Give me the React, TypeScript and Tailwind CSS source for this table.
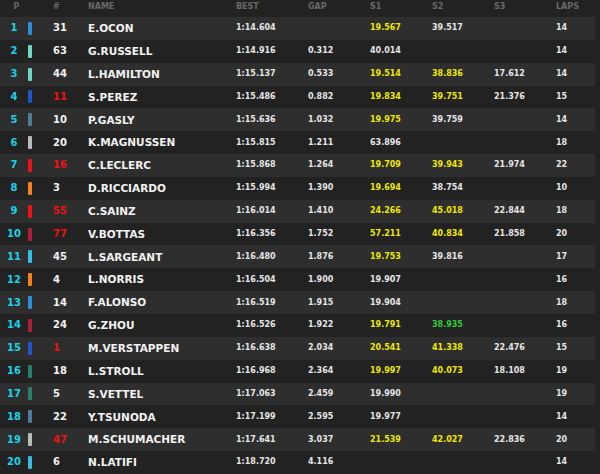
const TEAM = {
  alpine: '#2b8fd6',
  merc: '#6fd6bf',
  rb: '#1f55c9',
  at: '#4f7a9c',
  haas: '#b8bcbf',
  ferrari: '#e8141a',
  mclaren: '#f5821f',
  alfa: '#b0203a',
  williams: '#38bde0',
  aston: '#2a7f69',
}

type Cell = [string, 'w' | 'y' | 'g'] | null

interface Row {
  num: string
  red?: boolean
  name: string
  team: string
  best: string
  gap: string
  s1: Cell
  s2: Cell
  s3: Cell
  laps: string
}

const rows: Row[] = [
  { num: '31', name: 'E.OCON', team: TEAM.alpine, best: '1:14.604', gap: '', s1: ['19.567', 'y'], s2: ['39.517', 'w'], s3: null, laps: '14' },
  { num: '63', name: 'G.RUSSELL', team: TEAM.merc, best: '1:14.916', gap: '0.312', s1: ['40.014', 'w'], s2: null, s3: null, laps: '14' },
  { num: '44', name: 'L.HAMILTON', team: TEAM.merc, best: '1:15.137', gap: '0.533', s1: ['19.514', 'y'], s2: ['38.836', 'y'], s3: ['17.612', 'w'], laps: '14' },
  { num: '11', red: true, name: 'S.PEREZ', team: TEAM.rb, best: '1:15.486', gap: '0.882', s1: ['19.834', 'y'], s2: ['39.751', 'y'], s3: ['21.376', 'w'], laps: '15' },
  { num: '10', name: 'P.GASLY', team: TEAM.at, best: '1:15.636', gap: '1.032', s1: ['19.975', 'y'], s2: ['39.759', 'w'], s3: null, laps: '14' },
  { num: '20', name: 'K.MAGNUSSEN', team: TEAM.haas, best: '1:15.815', gap: '1.211', s1: ['63.896', 'w'], s2: null, s3: null, laps: '18' },
  { num: '16', red: true, name: 'C.LECLERC', team: TEAM.ferrari, best: '1:15.868', gap: '1.264', s1: ['19.709', 'y'], s2: ['39.943', 'y'], s3: ['21.974', 'w'], laps: '22' },
  { num: '3', name: 'D.RICCIARDO', team: TEAM.mclaren, best: '1:15.994', gap: '1.390', s1: ['19.694', 'y'], s2: ['38.754', 'w'], s3: null, laps: '10' },
  { num: '55', red: true, name: 'C.SAINZ', team: TEAM.ferrari, best: '1:16.014', gap: '1.410', s1: ['24.266', 'y'], s2: ['45.018', 'y'], s3: ['22.844', 'w'], laps: '18' },
  { num: '77', red: true, name: 'V.BOTTAS', team: TEAM.alfa, best: '1:16.356', gap: '1.752', s1: ['57.211', 'y'], s2: ['40.834', 'y'], s3: ['21.858', 'w'], laps: '20' },
  { num: '45', name: 'L.SARGEANT', team: TEAM.williams, best: '1:16.480', gap: '1.876', s1: ['19.753', 'y'], s2: ['39.816', 'w'], s3: null, laps: '17' },
  { num: '4', name: 'L.NORRIS', team: TEAM.mclaren, best: '1:16.504', gap: '1.900', s1: ['19.907', 'w'], s2: null, s3: null, laps: '16' },
  { num: '14', name: 'F.ALONSO', team: TEAM.alpine, best: '1:16.519', gap: '1.915', s1: ['19.904', 'w'], s2: null, s3: null, laps: '18' },
  { num: '24', name: 'G.ZHOU', team: TEAM.alfa, best: '1:16.526', gap: '1.922', s1: ['19.791', 'y'], s2: ['38.935', 'g'], s3: null, laps: '16' },
  { num: '1', red: true, name: 'M.VERSTAPPEN', team: TEAM.rb, best: '1:16.638', gap: '2.034', s1: ['20.541', 'y'], s2: ['41.338', 'y'], s3: ['22.476', 'w'], laps: '15' },
  { num: '18', name: 'L.STROLL', team: TEAM.aston, best: '1:16.968', gap: '2.364', s1: ['19.997', 'y'], s2: ['40.073', 'y'], s3: ['18.108', 'w'], laps: '19' },
  { num: '5', name: 'S.VETTEL', team: TEAM.aston, best: '1:17.063', gap: '2.459', s1: ['19.990', 'w'], s2: null, s3: null, laps: '19' },
  { num: '22', name: 'Y.TSUNODA', team: TEAM.at, best: '1:17.199', gap: '2.595', s1: ['19.977', 'w'], s2: null, s3: null, laps: '14' },
  { num: '47', red: true, name: 'M.SCHUMACHER', team: TEAM.haas, best: '1:17.641', gap: '3.037', s1: ['21.539', 'y'], s2: ['42.027', 'y'], s3: ['22.836', 'w'], laps: '20' },
  { num: '6', name: 'N.LATIFI', team: TEAM.williams, best: '1:18.720', gap: '4.116', s1: null, s2: null, s3: null, laps: '14' },
]

const sectorColor = {
  w: 'text-[#e6e6e6]',
  y: 'text-[#eee800]',
  g: 'text-[#33cc3a]',
}

const Sector = ({ cell }: { cell: Cell }) => (
  <div className={`w-[62px] text-[8px] ${cell ? sectorColor[cell[1]] : ''}`}>
    {cell ? cell[0] : ''}
  </div>
)

const App = () => {
  return (
    <div
      className="h-[474px] w-[600px] overflow-hidden bg-[#222222] font-bold"
      style={{ fontFamily: '"DejaVu Sans", sans-serif' }}
    >
      <div className="w-[595px]">
        <div className="flex h-[17px] items-start pt-[1px] text-[8px] leading-[11px] text-[#686868]">
          <div className="w-[33px] text-center">P</div>
          <div className="w-[20px]" />
          <div className="w-[35px]">#</div>
          <div className="w-[148px]">NAME</div>
          <div className="w-[72px]">BEST</div>
          <div className="w-[62px]">GAP</div>
          <div className="w-[62px]">S1</div>
          <div className="w-[62px]">S2</div>
          <div className="w-[62px]">S3</div>
          <div>LAPS</div>
        </div>
        {rows.map((r, i) => (
          <div
            key={r.name}
            className={`flex h-[22.85px] items-center leading-none ${
              i % 2 === 0 ? 'bg-[#2e2e2e]' : ''
            }`}
          >
            <div className="w-[28px] text-center text-[10px] text-[#1ad3e8]">{i + 1}</div>
            <div className="h-[13px] w-[4px] rounded-[1px]" style={{ background: r.team }} />
            <div className="w-[21px]" />
            <div className={`w-[35px] text-[10px] ${r.red ? 'text-[#ee1111]' : 'text-[#f2f2f2]'}`}>
              {r.num}
            </div>
            <div className="w-[148px] text-[10.5px] text-[#f2f2f2]">{r.name}</div>
            <div className="w-[72px] text-[8px] text-[#e6e6e6]">{r.best}</div>
            <div className="w-[62px] text-[8px] text-[#e6e6e6]">{r.gap}</div>
            <Sector cell={r.s1} />
            <Sector cell={r.s2} />
            <Sector cell={r.s3} />
            <div className="text-[8px] text-[#e6e6e6]">{r.laps}</div>
          </div>
        ))}
      </div>
    </div>
  )
}

export default App
